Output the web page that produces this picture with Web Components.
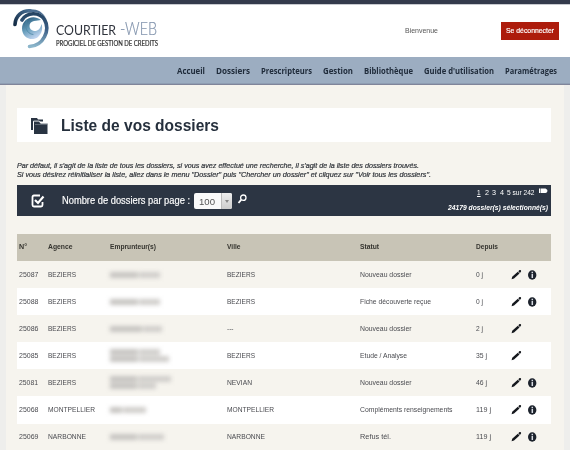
<!DOCTYPE html>
<html lang="fr">
<head>
<meta charset="utf-8">
<title>Courtier-Web</title>
<style>
html,body{margin:0;width:570px;height:450px;overflow:hidden;background:#eeeeec;font-family:"Liberation Sans",Arial,sans-serif;color:#2b3440}
</style>
</head>
<body>
<cw-app></cw-app>
<script>
const define = (name, html, setup) => customElements.define(name, class extends HTMLElement {
  connectedCallback() {
    if (this.shadowRoot) return;
    const root = this.attachShadow({mode: 'open'});
    root.innerHTML = typeof html === 'function' ? html(this) : html;
    if (setup) setup(this, root);
  }
});

// One line of text condensed or widened to the width given in "w".
define('cw-text', el => `<style>:host{display:block;width:${el.getAttribute('w')}px;white-space:nowrap;flex:none}span{display:inline-block;transform-origin:0 50%}</style><span><slot></slot></span>`,
  (el, root) => {
    const s = root.querySelector('span');
    s.style.transform = `scaleX(${+el.getAttribute('w') / s.getBoundingClientRect().width})`;
  });

define('cw-logo', `<style>
:host{display:flex;height:52px;padding-left:12px;box-sizing:border-box}
svg{flex:none}
.t{padding:13px 0 0 6px}
.n{display:flex;align-items:baseline;gap:4px;height:22px;line-height:22px;font-family:Lato,sans-serif;color:#30343d;font-size:14px}
.w{font-size:17.5px;color:#8193ac;font-weight:300;-webkit-text-stroke:.2px #8193ac}
.s{font-size:7.3px;line-height:10px;color:#333;margin-top:-1px;font-family:Lato,sans-serif;-webkit-text-stroke:.2px #333}
</style>
<svg width="38" height="47" viewBox="12 5 38 47" fill="none" stroke-linecap="round">
<defs><linearGradient id="a" x1="0" y1="1" x2="1" y2="0"><stop offset="0" stop-color="#152c46"/><stop offset="1" stop-color="#456c91"/></linearGradient>
<linearGradient id="b" x1="0" y1="0" x2="0" y2="1"><stop offset="0" stop-color="#244463"/><stop offset=".5" stop-color="#3e6188"/><stop offset="1" stop-color="#8db7cc"/></linearGradient>
<linearGradient id="c" x1="0" y1="0" x2=".5" y2="1"><stop offset="0" stop-color="#1e4e70"/><stop offset=".55" stop-color="#659cba"/><stop offset="1" stop-color="#bdd2ee"/></linearGradient></defs>
<path d="M15 24.500C15.500 16 21.500 10.500 30 10.800" stroke="url(#a)" stroke-width="3.600"/>
<path d="M28 9.300C37 8.500 43 12 46 18C41 13 36 11.500 28 12.300Z" fill="#4a6d90"/>
<path d="M22 20C27 12 39 11.500 44.500 19.500C50.500 30 43.500 46 29.500 46.500" stroke="url(#b)" stroke-width="3.600"/>
<path d="M41 20C32 13.500 22 20 22 28.500C22 37.500 31.500 42 38 37C42 33.500 43 28 41.500 24C40.500 29 37.500 31.500 34 31C28 30 28 22 34 21C37 20.500 39 20.500 41 20Z" fill="url(#c)"/>
<path d="M27 20C24 25 26 34 33 34.500" stroke="#4c86a5" stroke-width=".8"/>
</svg>
<div class="t"><div class="n"><cw-text w="60">COURTIER</cw-text><cw-text class="w" w="37">-WEB</cw-text></div><cw-text class="s" w="102">PROGICIEL DE GESTION DE CREDITS</cw-text></div>`);

define('cw-header', `<style>
:host{display:flex;height:57px;background:#fff;border-top:4px solid #343a4c;box-sizing:border-box;padding-top:1px;box-shadow:inset 0 1px #c8cad0}
.b{margin:21px 0 0 247px;font-size:8px;line-height:10px;color:#555}
.d{margin:17px 0 0 63px;width:58px;height:18px;background:#ad1c0c;color:#fff;font-size:8px;line-height:18px;padding-left:5px;box-sizing:border-box;-webkit-text-stroke:.2px #fff}
</style><cw-logo></cw-logo><cw-text class="b" w="33">Bienvenue</cw-text><div class="d"><cw-text w="48">Se déconnecter</cw-text></div>`);

define('cw-nav', `<style>
:host{display:flex;height:28px;background:#9cadc1;border-bottom:1px solid #80859a;box-sizing:border-box;padding-left:177px;gap:11px;font:bold 8px/27px "Open Sans",sans-serif;color:#202c3b;box-shadow:inset 0 -1px #8f9eb3}
</style><cw-text w="28">Accueil</cw-text><cw-text w="34">Dossiers</cw-text><cw-text w="51">Prescripteurs</cw-text><cw-text w="30">Gestion</cw-text><cw-text w="49">Bibliothèque</cw-text><cw-text w="70">Guide d'utilisation</cw-text><cw-text w="52">Paramétrages</cw-text>`);

define('cw-title', `<style>
:host{display:flex;align-items:center;height:34px;background:#fff;padding-left:14px;gap:13px;color:#252f3c;font-weight:bold;font-size:16.5px;line-height:34px}
svg{flex:none;margin-top:1px}
</style><svg width="17" height="18" viewBox="0 0 17 18"><path d="M0 13V1H6L7 2.500H12V4.500H2V13Z" fill="#293442"/><path d="M3 4.500H8L9.500 6.500H16.500V17H3Z" fill="#293442"/><path d="M4 7.500H16" stroke="#828994" stroke-width=".6"/><path d="M2.500 13V4H8.300L9.800 6H16" fill="none" stroke="#fff" stroke-width=".7"/></svg><cw-text w="158">Liste de vos dossiers</cw-text>`);

define('cw-toolbar', `<style>
:host{display:flex;height:31px;background:#2c3543;color:#fff;box-sizing:border-box}
.c{margin:9px 0 0 14px}
.l{margin:0 0 0 16px;font-size:10px;line-height:31px;-webkit-text-stroke:.15px #fff}
.s{margin:8px 0 0 4px;width:38px;height:16px;background:#fafafa;border-radius:2px;display:flex;color:#555;font-size:9.5px;line-height:17px;box-sizing:border-box;padding-left:5px}
.s i{display:flex;align-items:center;justify-content:center;margin-left:auto;width:10px;background:linear-gradient(#eee,#ccc);border-left:1px solid #bbb;border-radius:0 2px 2px 0}
.s i:after{content:"";border:2px solid transparent;border-top:3px solid #888;border-bottom:0}
.m{margin:9px 0 0 5px}
svg{flex:none}
.r{margin-left:auto;padding-right:3px}
.p{display:flex;gap:3.500px;height:14px;padding-top:1px;justify-content:flex-end;font-size:7.5px;line-height:13px}
.p svg{margin:2px 0 0 1px}
u{text-underline-offset:1px}
.k{font:italic bold 7.5px/13px "Liberation Sans",sans-serif;margin-top:1px}
</style>
<svg class="c" width="15" height="14" viewBox="0 0 15 14" fill="none" stroke="#fff"><path d="M9 1.500H3Q1.500 1.500 1.500 3V11Q1.500 12.500 3 12.500H10Q11.500 12.500 11.500 11V8" stroke-width="1.800"/><path d="M4 6L7 9L12.500 2.500" stroke-width="2.200"/></svg>
<cw-text class="l" w="128">Nombre de dossiers par page :</cw-text>
<div class="s"><cw-text w="16">100</cw-text><i></i></div>
<svg class="m" width="11" height="11" viewBox="0 0 11 11" fill="none" stroke="#fff"><circle cx="6.300" cy="3.700" r="2.700" stroke-width="1.300"/><path d="M4.300 5.700L1.500 9" stroke-width="1.800"/></svg>
<div class="r"><div class="p"><cw-text w="3.6"><u>1</u></cw-text><cw-text w="4">2</cw-text><cw-text w="4">3</cw-text><cw-text w="4">4</cw-text><cw-text w="27.500">5 sur 242</cw-text><svg width="9" height="6" viewBox="0 0 9 6"><path d="M0 .5H1.500V5H0ZM2 .5H6.500Q8.800 1.500 8.500 3Q8 5 6.500 5H2Z" fill="#fff"/></svg></div><cw-text class="k" w="100">24179 dossier(s) sélectionné(s)</cw-text></div>`);

// Masked borrower name: soft grey smears, one list of widths per line.
define('cw-masked', el => `<style>:host{display:block;filter:blur(2px)}div{display:flex;gap:1px;margin:1px 0}b{height:6px;background:#c6c4c1}b+b{background:#d0cecb}</style>` +
  el.getAttribute('lines').split(';').map(l => `<div>${l.split(',').map(w => `<b style="width:${w}px"></b>`).join('')}</div>`).join(''));

define('cw-row', el => {
  const d = k => el.getAttribute(k);
  const cell = (k, w) => `<div><cw-text w="${w}">${d(k)}</cw-text></div>`;
  const [a, b, c, e, f] = d('w').split(',');
  return `<style>:host{display:grid;grid-template-columns:29px 62px 117px 133px 116px 34px 18px 1fr;align-items:center;height:27.1px;padding-left:2px;font-size:8px;line-height:10px;color:#4a4b50}
:host([alt]){background:#fff}svg{display:block}</style>
${cell('n', a)}${cell('agence', b)}<cw-masked lines="${d('m')}"></cw-masked>${cell('ville', c)}${cell('statut', e)}${cell('depuis', f)}
<svg width="12" height="11" viewBox="0 0 12 11" style="margin:-1px 0 0 .5px"><path d="M.6 10.200L1.200 7.800L6.800 2.700L8.500 4.400L3 9.600ZM7.300 2.200L8.500 1.100Q9.300 .7 9.900 1.300Q10.400 2 9.900 2.700L8.900 3.900Z" fill="#15181d"/></svg>
${el.hasAttribute('info') ? '<svg width="9" height="10" viewBox="0 0 9 10"><ellipse cx="4.200" cy="5" rx="4.200" ry="4.700" fill="#1c222c"/><path d="M4.300 1.800V3.200M4.300 3.900V8" stroke="#d9dde5" stroke-width="1.500"/></svg>' : '<span></span>'}`;
});

define('cw-table', `<style>
:host{display:block;height:216px;overflow:hidden}
.h{display:grid;grid-template-columns:29px 62px 117px 133px 116px 1fr;height:27px;background:#c8c4b6;padding-left:2px;font:bold 7.8px/26px "Liberation Sans",sans-serif;color:#35342f}
</style><div class="h"><cw-text w="8">N°</cw-text><cw-text w="24.500">Agence</cw-text><cw-text w="46">Emprunteur(s)</cw-text><cw-text w="13.500">Ville</cw-text><cw-text w="19">Statut</cw-text><cw-text w="22">Depuis</cw-text></div>
<cw-row n="25087" agence="BEZIERS" ville="BEZIERS" statut="Nouveau dossier" depuis="0 j" w="19.5,28,28,51.500,7" m="28,21" info></cw-row>
<cw-row alt n="25088" agence="BEZIERS" ville="BEZIERS" statut="Fiche découverte reçue" depuis="0 j" w="19.5,28,28,71,7" m="28,21" info></cw-row>
<cw-row n="25086" agence="BEZIERS" ville="---" statut="Nouveau dossier" depuis="2 j" w="19.5,28,6.500,51.500,7" m="32,19"></cw-row>
<cw-row alt n="25085" agence="BEZIERS" ville="BEZIERS" statut="Etude / Analyse" depuis="35 j" w="19.5,28,28,47,11" m="28,21;28,30"></cw-row>
<cw-row n="25081" agence="BEZIERS" ville="NEVIAN" statut="Nouveau dossier" depuis="46 j" w="19,28,25,51.500,11" m="27,33;27,18" info></cw-row>
<cw-row alt n="25068" agence="MONTPELLIER" ville="MONTPELLIER" statut="Compléments renseignements" depuis="119 j" w="19.5,47,47,92.500,15" m="12,23" info></cw-row>
<cw-row n="25069" agence="NARBONNE" ville="NARBONNE" statut="Refus tél." depuis="119 j" w="19.5,38,38,31,15" m="27,26" info></cw-row>`);

define('cw-app', `<style>
:host{display:block;width:570px;height:450px}
main{display:block;margin:0 6px;height:365px;padding:23px 13px 0 11px;box-sizing:border-box;background:#f6f4ee}
.i{font:italic 7.2px/8.5px "Liberation Sans",sans-serif;color:#30343a;-webkit-text-stroke:.2px #30343a}
.n{padding:20px 0 6px}
.g{height:18px}
</style><cw-header></cw-header><cw-nav></cw-nav>
<main><cw-title></cw-title><div class="n"><cw-text class="i" w="402">Par défaut, il s'agit de la liste de tous les dossiers, si vous avez effectué une recherche, il s'agit de la liste des dossiers trouvés.</cw-text><cw-text class="i" w="414">Si vous désirez réinitialiser la liste, allez dans le menu "Dossier" puis "Chercher un dossier" et cliquez sur "Voir tous les dossiers".</cw-text></div>
<cw-toolbar></cw-toolbar><div class="g"></div><cw-table></cw-table></main>`);
</script>
</body>
</html>
